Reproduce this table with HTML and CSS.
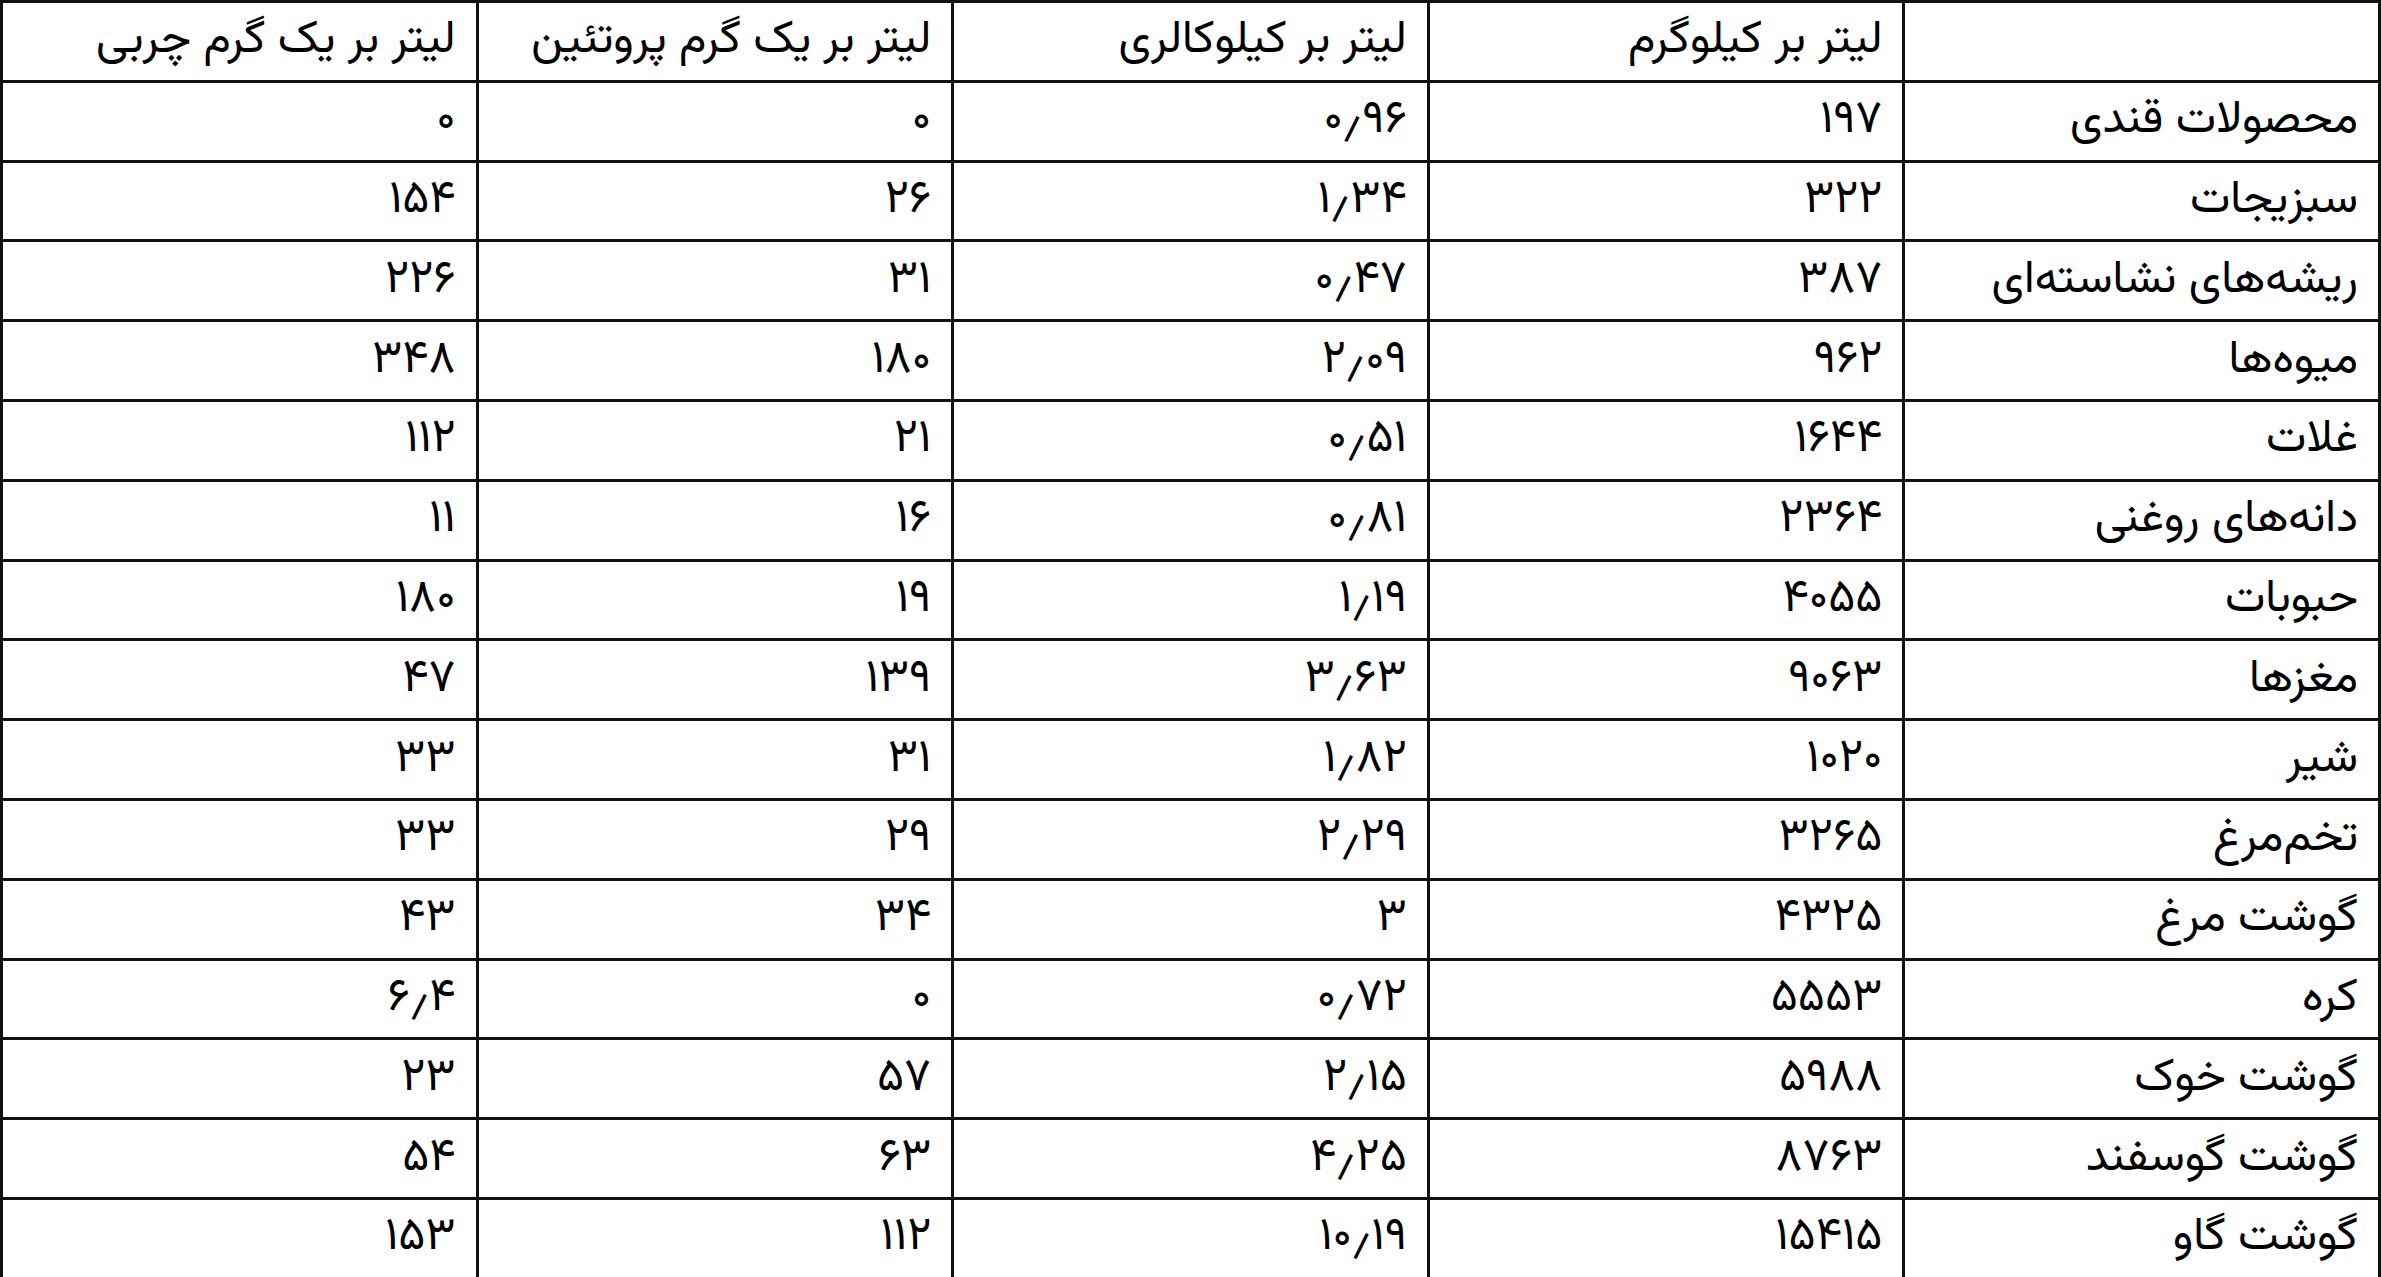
FILE: index.html
```html
<!DOCTYPE html>
<html lang="fa" dir="rtl">
<head>
<meta charset="utf-8">
<title>ردپای آب</title>
<link rel="stylesheet" href="styles.css">
</head>
<body>
<table class="water-table">
  <thead>
    <tr>
      <th></th>
      <th>لیتر بر کیلوگرم</th>
      <th>لیتر بر کیلوکالری</th>
      <th>لیتر بر یک گرم پروتئین</th>
      <th>لیتر بر یک گرم چربی</th>
    </tr>
  </thead>
  <tbody>
    <tr><td>محصولات قندی</td><td>۱۹۷</td><td>۰٫۹۶</td><td>۰</td><td>۰</td></tr>
    <tr><td>سبزیجات</td><td>۳۲۲</td><td>۱٫۳۴</td><td>۲۶</td><td>۱۵۴</td></tr>
    <tr><td>ریشه‌های نشاسته‌ای</td><td>۳۸۷</td><td>۰٫۴۷</td><td>۳۱</td><td>۲۲۶</td></tr>
    <tr><td>میوه‌ها</td><td>۹۶۲</td><td>۲٫۰۹</td><td>۱۸۰</td><td>۳۴۸</td></tr>
    <tr><td>غلات</td><td>۱۶۴۴</td><td>۰٫۵۱</td><td>۲۱</td><td>۱۱۲</td></tr>
    <tr><td>دانه‌های روغنی</td><td>۲۳۶۴</td><td>۰٫۸۱</td><td>۱۶</td><td>۱۱</td></tr>
    <tr><td>حبوبات</td><td>۴۰۵۵</td><td>۱٫۱۹</td><td>۱۹</td><td>۱۸۰</td></tr>
    <tr><td>مغزها</td><td>۹۰۶۳</td><td>۳٫۶۳</td><td>۱۳۹</td><td>۴۷</td></tr>
    <tr><td>شیر</td><td>۱۰۲۰</td><td>۱٫۸۲</td><td>۳۱</td><td>۳۳</td></tr>
    <tr><td>تخم‌مرغ</td><td>۳۲۶۵</td><td>۲٫۲۹</td><td>۲۹</td><td>۳۳</td></tr>
    <tr><td>گوشت مرغ</td><td>۴۳۲۵</td><td>۳</td><td>۳۴</td><td>۴۳</td></tr>
    <tr><td>کره</td><td>۵۵۵۳</td><td>۰٫۷۲</td><td>۰</td><td>۶٫۴</td></tr>
    <tr><td>گوشت خوک</td><td>۵۹۸۸</td><td>۲٫۱۵</td><td>۵۷</td><td>۲۳</td></tr>
    <tr><td>گوشت گوسفند</td><td>۸۷۶۳</td><td>۴٫۲۵</td><td>۶۳</td><td>۵۴</td></tr>
    <tr><td>گوشت گاو</td><td>۱۵۴۱۵</td><td>۱۰٫۱۹</td><td>۱۱۲</td><td>۱۵۳</td></tr>
  </tbody>
</table>
</body>
</html>
```

FILE: styles.css
```css
html, body {
  margin: 0;
  padding: 0;
  background: #ffffff;
}

body {
  width: 2381px;
  height: 1277px;
  overflow: hidden;
  font-family: "Vazirmatn", "Vazir", "Noto Sans Arabic", "DejaVu Sans", sans-serif;
  color: #000000;
}

.water-table {
  width: 2381px;
  height: 1277px;
  border-collapse: collapse;
  table-layout: fixed;
}

.water-table tr {
  height: 79.8px;
}

.water-table th,
.water-table td {
  border: 3px solid #111111;
  padding: 0 20px 0 20px;
  text-align: right;
  vertical-align: middle;
  font-size: 46px;
  font-weight: normal;
  line-height: 1;
  white-space: nowrap;
}
```
